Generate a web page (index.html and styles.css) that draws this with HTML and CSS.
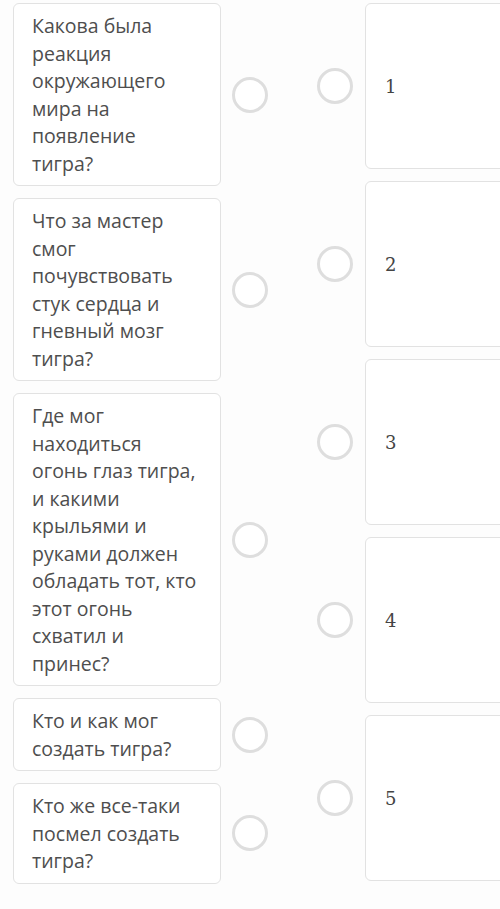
FILE: index.html
```html
<!DOCTYPE html>
<html>
<head>
  <meta charset="utf-8">
  <title>Сопоставление</title>
  <link rel="stylesheet" href="styles.css">
</head>
<body>
  <div class="match">
    <div class="column questions">
      <div class="row">
        <div class="card">Какова была реакция окружающего мира на появление тигра?</div>
        <span class="dot"></span>
      </div>
      <div class="row">
        <div class="card">Что за мастер смог почувствовать стук сердца и гневный мозг тигра?</div>
        <span class="dot"></span>
      </div>
      <div class="row">
        <div class="card">Где мог находиться огонь глаз тигра, и какими крыльями и руками должен обладать тот, кто этот огонь схватил и принес?</div>
        <span class="dot"></span>
      </div>
      <div class="row">
        <div class="card">Кто и как мог создать тигра?</div>
        <span class="dot"></span>
      </div>
      <div class="row">
        <div class="card">Кто же все-таки посмел создать тигра?</div>
        <span class="dot"></span>
      </div>
    </div>

    <div class="column answers">
      <div class="row">
        <span class="dot"></span>
        <div class="card answer"><span class="num">1</span></div>
      </div>
      <div class="row">
        <span class="dot"></span>
        <div class="card answer"><span class="num">2</span></div>
      </div>
      <div class="row">
        <span class="dot"></span>
        <div class="card answer"><span class="num">3</span></div>
      </div>
      <div class="row">
        <span class="dot"></span>
        <div class="card answer"><span class="num">4</span></div>
      </div>
      <div class="row">
        <span class="dot"></span>
        <div class="card answer"><span class="num">5</span></div>
      </div>
    </div>
  </div>
</body>
</html>
```

FILE: styles.css
```css
html, body {
  overflow: hidden;
}

body {
  margin: 0;
  background-color: #fdfdfd;
  font-family: "Open Sans", "DejaVu Sans", sans-serif;
  color: #4e4e4e;
}

.match {
  display: flex;
  align-items: flex-start;
  gap: 49px;
  padding: 3px 0 0 13px;
  overflow: hidden;
}

.column {
  display: flex;
  flex-direction: column;
  gap: 12px;
  flex: none;
}

.row {
  display: flex;
  align-items: center;
  gap: 11px;
}

.card {
  background-color: #fff;
  border: 1px solid #e2e2e2;
  border-radius: 6px;
  box-sizing: border-box;
}

.questions .card {
  width: 208px;
  padding: 8px 20px 8px 18px;
  font-size: 19.5px;
  line-height: 27.5px;
}

.answers .row {
  gap: 12px;
}

.answer {
  width: 208px;
  height: 166px;
  display: flex;
  align-items: center;
  padding-left: 19px;
}

.num {
  font-family: "DejaVu Serif", "Liberation Serif", serif;
  font-size: 18px;
  color: #444;
}

.dot {
  flex: none;
  width: 36px;
  height: 36px;
  box-sizing: border-box;
  border: 3px solid #dedede;
  border-radius: 50%;
  background-color: #fff;
}
```
